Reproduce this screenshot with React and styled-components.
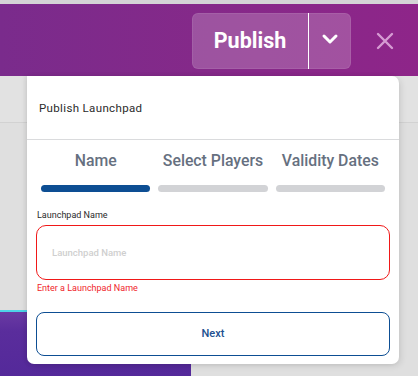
import React from "react"
import styled, { createGlobalStyle } from "styled-components"

const GlobalStyle = createGlobalStyle`
  html, body {
    margin: 0;
    padding: 0;
    width: 418px;
    height: 376px;
    overflow: hidden;
    background: #dedede;
    font-family: Roboto, "Liberation Sans", sans-serif;
  }
`

const Page = styled.div`
  display: flex;
  flex-direction: column;
  width: 418px;
  height: 376px;
  border-top: 4px solid #d4d4d6;
  box-sizing: border-box;
`

const Header = styled.header`
  display: flex;
  align-items: center;
  justify-content: flex-end;
  gap: 25px;
  height: 72px;
  padding: 0 24px 0 0;
  flex-shrink: 0;
  background: linear-gradient(90deg, #7a2b8c 0%, #852989 50%, #8e2589 100%);
`

const SplitButton = styled.div`
  display: flex;
  height: 56px;
  margin-top: 2px;
  border-radius: 6px;
  overflow: hidden;
  background: rgba(255, 255, 255, 0.2);
  box-shadow: inset 0 0 0 1px rgba(255, 255, 255, 0.08);
`

const PublishButton = styled.button`
  width: 117px;
  border: none;
  background: transparent;
  color: #fff;
  font-family: Roboto, "Liberation Sans", sans-serif;
  font-size: 21.5px;
  font-weight: 700;
  padding: 0 0 2px 0;
  border-right: 1px solid #fff;
  cursor: pointer;
`

const CaretButton = styled.button`
  width: 42px;
  border: none;
  background: transparent;
  display: flex;
  align-items: center;
  justify-content: center;
  padding: 0 0 4px 0;
  cursor: pointer;
`

const CloseButton = styled.button`
  border: none;
  background: transparent;
  padding: 0;
  display: flex;
  margin-top: 2px;
  cursor: pointer;
`

const Body = styled.div`
  position: relative;
  flex: 1;
  display: flex;
  flex-direction: column;
  background: #dfdfdf;
`

const BackdropTop = styled.div`
  height: 46px;
  background: #e2e2e2;
  border-bottom: 1px solid #d2d2d2;
`

const BackdropMain = styled.div`
  flex: 1;
  display: flex;
  flex-direction: column;
  justify-content: flex-end;
`

const Thumb = styled.div`
  width: 191px;
  height: 64px;
  border-top: 2px solid #4fd2e8;
  background: linear-gradient(180deg, #6a3aa3 0%, #5a2d9c 30%, #54299a 100%);
`

const Popover = styled.div`
  position: absolute;
  top: 0;
  left: 27px;
  width: 372px;
  height: 288px;
  background: #fff;
  border-radius: 0 7px 7px 7px;
  box-shadow: -2px 0 4px rgba(0, 0, 0, 0.08), 2px 2px 6px rgba(0, 0, 0, 0.1);
  display: flex;
  flex-direction: column;
`

const Title = styled.div`
  height: 64px;
  box-sizing: border-box;
  padding: 25px 0 0 12px;
  font-size: 11.5px;
  letter-spacing: 0.35px;
  color: #2b2b2b;
  border-bottom: 1px solid #dadbdd;
  font-family: Roboto, "Liberation Sans", sans-serif;
`

const Steps = styled.div`
  display: grid;
  grid-template-columns: repeat(3, 1fr);
  column-gap: 8px;
  padding: 11px 14px 0 14px;
`

const Step = styled.div`
  display: flex;
  flex-direction: column;
  align-items: center;
  gap: 14px;
`

const StepLabel = styled.div`
  font-size: 15.8px;
  font-weight: 500;
  color: #667080;
  line-height: 20px;
  white-space: nowrap;
`

const StepBar = styled.div`
  width: 100%;
  height: 7px;
  border-radius: 4px;
  background: ${(p) => (p.$active ? "#0d4e93" : "#d2d3d6")};
`

const Form = styled.div`
  display: flex;
  flex-direction: column;
  padding: 17px 9px 0 9px;
`

const Label = styled.label`
  font-size: 9px;
  color: #2b2b2b;
  line-height: 12px;
  margin-left: 1px;
`

const Input = styled.div`
  height: 53px;
  margin-top: 4px;
  border: 1px solid #f01818;
  border-radius: 10px;
  display: flex;
  align-items: center;
  padding: 0 15px;
  font-size: 9.5px;
  color: #cfcfcf;
  font-weight: 500;
`

const ErrorText = styled.div`
  margin-top: 2px;
  margin-left: 1px;
  font-size: 9px;
  color: #f0262b;
  line-height: 12px;
`

const NextButton = styled.button`
  margin-top: 18px;
  height: 44px;
  border: 1px solid #0d4e93;
  border-radius: 8px;
  background: #fff;
  color: #21508f;
  font-family: Roboto, "Liberation Sans", sans-serif;
  font-size: 11px;
  font-weight: 500;
  padding-bottom: 2px;
  cursor: pointer;
`

const steps = ["Name", "Select Players", "Validity Dates"]

export default function App() {
  return (
    <>
      <GlobalStyle />
      <Page>
        <Header>
          <SplitButton>
            <PublishButton>Publish</PublishButton>
            <CaretButton>
              <svg width="18" height="12" viewBox="0 0 18 12">
                <path
                  d="M3 3 L9 9 L15 3"
                  fill="none"
                  stroke="#fff"
                  strokeWidth="3"
                  strokeLinecap="round"
                  strokeLinejoin="round"
                />
              </svg>
            </CaretButton>
          </SplitButton>
          <CloseButton>
            <svg width="18" height="18" viewBox="0 0 18 18">
              <path
                d="M2 2 L16 16 M16 2 L2 16"
                stroke="#d69bd3"
                strokeWidth="2.4"
                strokeLinecap="round"
              />
            </svg>
          </CloseButton>
        </Header>
        <Body>
          <BackdropTop />
          <BackdropMain>
            <Thumb />
          </BackdropMain>
          <Popover>
            <Title>Publish Launchpad</Title>
            <Steps>
              {steps.map((s, i) => (
                <Step key={s}>
                  <StepLabel>{s}</StepLabel>
                  <StepBar $active={i === 0} />
                </Step>
              ))}
            </Steps>
            <Form>
              <Label>Launchpad Name</Label>
              <Input>Launchpad Name</Input>
              <ErrorText>Enter a Launchpad Name</ErrorText>
              <NextButton>Next</NextButton>
            </Form>
          </Popover>
        </Body>
      </Page>
    </>
  )
}
